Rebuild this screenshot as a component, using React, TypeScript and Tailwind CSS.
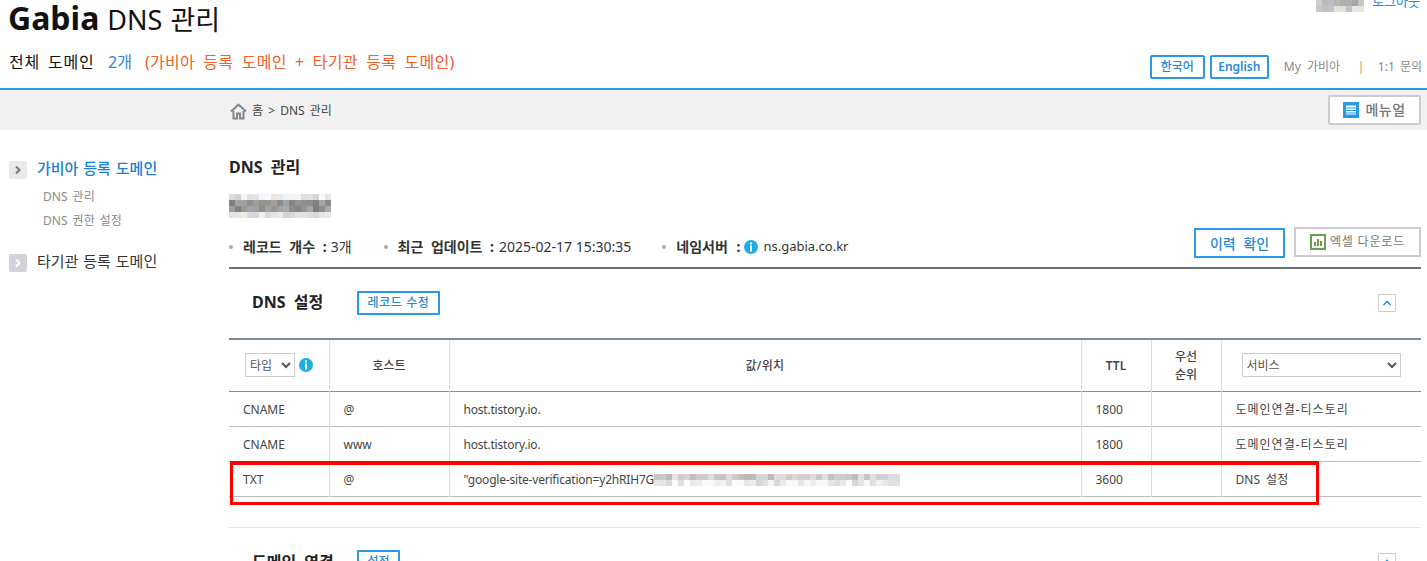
import React from "react";

const FONT = "font-['Noto_Sans','Noto_Sans_CJK_KR',sans-serif]";

function rand(seed: number) {
  const x = Math.sin(seed * 127.1) * 43758.5453;
  return x - Math.floor(x);
}

function Mosaic({ cols, rows, cell, seed, light, className }: { cols: number; rows: number; cell: number; seed: number; light: number; className?: string }) {
  const rects = [];
  for (let r = 0; r < rows; r++) {
    for (let c = 0; c < cols; c++) {
      let edge = 0;
      if (rows > 2 && r === 0) edge = 85;
      if (r === rows - 1) edge = rows > 2 ? 75 : 28;
      const v = Math.min(250, Math.round(light + edge + rand(seed + r * 31 + c) * 45));
      const t = Math.round((rand(seed + r * 17 + c * 3) - 0.5) * 12);
      rects.push(<rect key={`${r}-${c}`} x={c * cell} y={r * cell} width={cell} height={cell} fill={`rgb(${Math.min(255, v + t)},${v},${Math.min(255, v - t)})`} />);
    }
  }
  return (
    <svg width={cols * cell} height={rows * cell} className={className} shapeRendering="crispEdges">
      {rects}
    </svg>
  );
}

function Info() {
  return (
    <svg width="14" height="14" viewBox="0 0 14 14" className="shrink-0">
      <circle cx="7" cy="7" r="7" fill="#1eaee0" />
      <rect x="6" y="2.5" width="2" height="2" fill="#fff" />
      <rect x="6" y="5.5" width="2" height="6" fill="#fff" />
    </svg>
  );
}

function Chevron({ active }: { active?: boolean }) {
  return (
    <span className={`flex h-[18px] w-[18px] shrink-0 items-center justify-center rounded-[2px] ${active ? "bg-[#e9e9e9]" : "bg-[#d0d3d7]"}`}>
      <svg width="8" height="10" viewBox="0 0 8 10">
        <path d="M2 1.5 L5.5 5 L2 8.5" fill="none" stroke={active ? "#777" : "#fff"} strokeWidth="2" />
      </svg>
    </span>
  );
}

function Dot() {
  return <span className="mr-[10px] h-[4px] w-[4px] rounded-full bg-[#aaa]" />;
}

function Up() {
  return <svg width="10" height="6" viewBox="0 0 10 6"><path d="M1.5 5 L5 1.5 L8.5 5" fill="none" stroke="#2b98e6" strokeWidth="1.6" /></svg>;
}

const rows = [
  ["CNAME", "@", "host.tistory.io.", "1800", "도메인연결-티스토리"],
  ["CNAME", "www", "host.tistory.io.", "1800", "도메인연결-티스토리"],
  ["TXT", "@", "\"google-site-verification=y2hRIH7G", "3600", "DNS 설정"],
];

export default function App() {
  return (
    <div className={`${FONT} h-[561px] w-[1427px] overflow-hidden bg-white text-[#333]`}>
      <header className="h-[90px] border-b-2 border-[#2b98e6]">
        <div className="flex h-[44px] justify-between">
          <h1 className="-mt-[2px] pl-[8px] text-[27px] leading-[40px] text-[#111] [word-spacing:1px]">
            <span className="text-[32px] font-bold">Gabia</span> DNS 관리
          </h1>
          <div className="flex h-[12px] items-start pr-[7px] text-[13px] leading-[18px] text-[#2b88d0]">
            <Mosaic cols={8} rows={2} cell={6} seed={4} light={165} className="mr-[8px]" />
            <span className="-mt-[8px]">로그아웃</span>
          </div>
        </div>
        <div className="flex h-[35px] items-start justify-between pl-[9px] pr-[5px]">
          <div className="mt-[6px] flex items-center text-[16px] leading-[24px]">
            <span className="w-[99px] tracking-[0.8px] text-[#111] [word-spacing:3px]">전체 도메인</span>
            <span className="w-[37px] text-[#2b88d0]">2개</span>
            <span className="tracking-[0.25px] text-[#f0602a] [word-spacing:4px]">(가비아 등록 도메인 + 타기관 등록 도메인)</span>
          </div>
          <div className="mt-[11px] flex items-center text-[12px]">
            <button className="mr-[5px] h-[24px] w-[55px] rounded-[2px] border-2 border-[#2b98e6] font-medium text-[#2b88d0]">한국어</button>
            <button className="mr-[15px] h-[24px] w-[59px] rounded-[2px] border-2 border-[#2b98e6] font-semibold text-[#2b88d0]">English</button>
            <span className="w-[74px] text-[#888] [word-spacing:3px]">My 가비아</span>
            <span className="w-[20px] text-[#c8955a]">|</span>
            <span className="text-[#888] [word-spacing:2px]">1:1 문의</span>
          </div>
        </div>
      </header>

      <nav className="flex h-[40px] items-center justify-between bg-[#f1f1f1] pl-[230px] pr-[6px]">
        <div className="flex items-center text-[12px] text-[#444] [word-spacing:2px]">
          <svg width="17" height="17" viewBox="0 0 17 17" className="mr-[5px] mt-[2px]">
            <path d="M1 8.5 L8.5 1.5 L16 8.5" fill="none" stroke="#7c8690" strokeWidth="2" />
            <path d="M3.5 8 V15.5 H7 V10.5 H10 V15.5 H13.5 V8" fill="none" stroke="#7c8690" strokeWidth="2" />
          </svg>
          <span className="mt-[1px]">홈 &gt; DNS 관리</span>
        </div>
        <button className="flex h-[30px] w-[93px] items-center justify-center rounded-[2px] border-2 border-[#ccc] bg-white text-[14px] font-medium tracking-[0.5px] text-[#777]">
          <svg width="16" height="16" viewBox="0 0 16 16" className="mr-[6px]">
            <rect width="16" height="16" fill="#2b98e6" />
            <rect x="3" y="3.5" width="10" height="9" fill="#fff" />
            <rect x="3" y="5.5" width="10" height="1" fill="#2b98e6" />
            <rect x="3" y="8" width="10" height="1" fill="#2b98e6" />
            <rect x="3" y="10.5" width="10" height="1" fill="#2b98e6" />
          </svg>
          <span className="-mt-[2px]">메뉴얼</span>
        </button>
      </nav>

      <div className="flex">
        <aside className="w-[229px] shrink-0 pl-[9px] pt-[30px]">
          <div className="flex h-[20px] items-center gap-[10px] text-[15px] font-medium text-[#1a80d0] [word-spacing:1px]">
            <Chevron active />
            <span className="-mt-[3px]">가비아 등록 도메인</span>
          </div>
          <div className="mt-[5px] pl-[34px] text-[12px] leading-[24px] text-[#8a8a8a] [word-spacing:2px]">
            <div>DNS 관리</div>
            <div>DNS 권한 설정</div>
          </div>
          <div className="mt-[20px] flex h-[20px] items-center gap-[10px] text-[15px] text-[#333] [word-spacing:1px]">
            <Chevron />
            <span className="-mt-[3px]">타기관 등록 도메인</span>
          </div>
        </aside>

        <main className="w-[1192px]">
          <h2 className="mt-[26px] text-[16px] font-bold leading-[22px] text-[#222] [word-spacing:4px]">DNS 관리</h2>
          <Mosaic cols={17} rows={4} cell={6} seed={9} light={125} className="mt-[16px]" />
          <div className="mt-[9px] flex h-[31px] items-center justify-between">
            <div className="mt-[8px] flex items-center text-[14px]">
              <span className="mr-[32px] flex items-center"><Dot /><b className="mr-[4px] font-bold [word-spacing:4px]">레코드 개수 :</b>3개</span>
              <span className="mr-[31px] flex items-center"><Dot /><b className="mr-[5px] font-bold [word-spacing:4px]">최근 업데이트 :</b>2025-02-17 15:30:35</span>
              <span className="flex items-center"><Dot /><b className="mr-[4px] font-bold [word-spacing:5px]">네임서버 :</b><Info /><span className="ml-[5px] text-[13px]">ns.gabia.co.kr</span></span>
            </div>
            <div className="flex items-start">
              <button className="mr-[9px] mt-[1px] h-[30px] w-[91px] border-2 border-[#2b98e6] text-[14px] font-medium text-[#2b88d0] [word-spacing:4px]">이력 확인</button>
              <button className="flex h-[30px] w-[127px] items-center justify-center border-2 border-[#ccc] text-[12px] tracking-[0.8px] text-[#777]">
                <svg width="16" height="16" viewBox="0 0 16 16" className="mr-[4px]">
                  <rect x="1" y="1" width="14" height="14" fill="#fff" stroke="#6b9e4f" strokeWidth="2" />
                  <rect x="4" y="8" width="2" height="4" fill="#6b9e4f" />
                  <rect x="7" y="5" width="2" height="7" fill="#6b9e4f" />
                  <rect x="10" y="7" width="2" height="5" fill="#6b9e4f" />
                </svg>
                엑셀 다운로드
              </button>
            </div>
          </div>
          <div className="mt-[9px] border-t-2 border-[#707070]" />

          <div className="flex h-[69px] items-start justify-between pr-[25px]">
            <div className="flex items-center pl-[23px] pt-[22px]">
              <span className="-mt-[3px] w-[105px] text-[16px] font-bold leading-[22px] text-[#222] [word-spacing:4px]">DNS 설정</span>
              <button className="h-[24px] w-[83px] rounded-[1px] border-2 border-[#2b98e6] text-[12px] font-medium tracking-[0.6px] text-[#2b88d0]">레코드 수정</button>
            </div>
            <button className="mt-[25px] flex h-[18px] w-[18px] items-center justify-center rounded-[1px] border border-[#ccc]">
              <Up />
            </button>
          </div>

          <div className="relative">
            <table className="w-full table-fixed border-collapse text-[12px] text-[#444]">
              <colgroup>
                <col className="w-[100px]" />
                <col className="w-[120px]" />
                <col className="w-[632px]" />
                <col className="w-[70px]" />
                <col className="w-[70px]" />
                <col className="w-[200px]" />
              </colgroup>
              <thead className="border-t-2 border-b border-[#7d8c9b]">
                <tr className="h-[52px]">
                  <th className="border-r border-[#ddd] pl-[16px] text-left font-normal">
                    <div className="flex items-center gap-[4px]">
                      <select className="h-[24px] w-[50px] border border-[#ccc] bg-white text-[12px] text-[#555]"><option>타입</option></select>
                      <Info />
                    </div>
                  </th>
                  <th className="border-r border-[#ddd] pt-[1px] font-medium">호스트</th>
                  <th className="border-r border-[#ddd] pt-[1px] font-medium tracking-[0.3px]">값/위치</th>
                  <th className="border-r border-[#ddd] pt-[1px] font-semibold">TTL</th>
                  <th className="border-r border-[#ddd] pt-[1px] font-medium leading-[18px]">우선<br />순위</th>
                  <th className="pl-[20px] pr-[20px] font-normal">
                    <select className="h-[24px] w-full border border-[#ccc] bg-white text-[12px] text-[#555]"><option>서비스</option></select>
                  </th>
                </tr>
              </thead>
              <tbody>
                {rows.map((r, i) => (
                  <tr key={i} className="h-[35px] border-b border-[#bbb]">
                    <td className="border-r border-[#ddd] pl-[14px] pt-[2px]">{r[0]}</td>
                    <td className="border-r border-[#ddd] pl-[14px] pt-[2px]">{r[1]}</td>
                    <td className="border-r border-[#ddd] pl-[14px] pt-[2px]">
                      <span className="flex items-center tracking-[-0.2px]">
                        {r[2]}
                        {i === 2 && <Mosaic cols={41} rows={2} cell={6} seed={21} light={185} />}
                      </span>
                    </td>
                    <td className="border-r border-[#ddd] pl-[14px] pt-[2px]">{r[3]}</td>
                    <td className="border-r border-[#ddd]" />
                    <td className={`pl-[14px] pt-[2px] ${i < 2 ? "tracking-[1px]" : "[word-spacing:3px]"}`}>{r[4]}</td>
                  </tr>
                ))}
              </tbody>
            </table>
            <div className="pointer-events-none absolute left-[1px] top-[123px] h-[44px] w-[1089px] border-[3px] border-t-[4px] border-[#ff0000]" />
          </div>

          <div className="mt-[30px] border-t border-[#e5e5e5]" />
          <div className="flex items-start justify-between pr-[25px] pt-[22px]">
            <div className="flex items-center pl-[23px]">
              <span className="w-[105px] text-[16px] font-bold leading-[22px] text-[#222] [word-spacing:4px]">도메인 연결</span>
              <button className="h-[24px] w-[43px] rounded-[1px] border-2 border-[#2b98e6] text-[12px] font-medium text-[#2b88d0]">설정</button>
            </div>
            <button className="mt-[3px] flex h-[18px] w-[18px] items-center justify-center rounded-[1px] border border-[#ccc]">
              <Up />
            </button>
          </div>
        </main>
      </div>
    </div>
  );
}
